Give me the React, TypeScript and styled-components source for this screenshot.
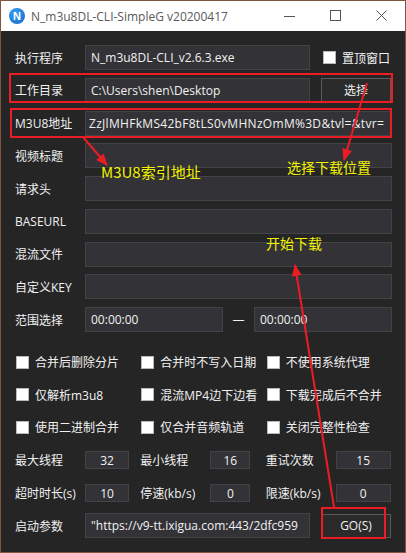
import React from "react";
import styled, { createGlobalStyle } from "styled-components";

const Global = createGlobalStyle`
  html, body { margin: 0; padding: 0; background: #ffffff; }
  * { box-sizing: border-box; }
`;

const FONT = `"Open Sans", "Noto Sans CJK SC", sans-serif`;

const Window = styled.div`
  position: relative;
  width: 406px;
  height: 553px;
  border: 1px solid #80573e;
  display: flex;
  flex-direction: column;
  font-family: ${FONT};
  overflow: hidden;
`;

const TitleBar = styled.div`
  height: 30px;
  background: #ffffff;
  display: flex;
  align-items: center;
  padding-left: 8px;
  flex: none;
`;

const AppIcon = styled.div`
  width: 16px;
  height: 16px;
  border-radius: 50%;
  background: radial-gradient(circle at 40% 35%, #3aa0f0, #1266c8);
  color: #fff;
  font: bold 11px "Liberation Sans", sans-serif;
  display: flex;
  align-items: center;
  justify-content: center;
`;

const Title = styled.div`
  margin-left: 6px;
  font-size: 12px;
  color: #5a5a5a;
  flex: 1;
  white-space: nowrap;
`;

const Controls = styled.div`
  display: flex;
  height: 100%;
`;

const CtrlBtn = styled.div`
  width: 46px;
  height: 100%;
  display: flex;
  align-items: center;
  justify-content: center;
`;

const Body = styled.div`
  flex: 1;
  background: #252526;
  padding: 14px 13px 0 14px;
  display: flex;
  flex-direction: column;
  color: #f1f1f1;
  font-size: 12px;
`;

const FieldList = styled.div`
  display: flex;
  flex-direction: column;
  gap: 7.75px;
`;

const FieldRow = styled.div`
  display: flex;
  align-items: center;
  height: 25px;
`;

const Label = styled.div`
  width: 70px;
  flex: none;
  white-space: nowrap;
`;

const TextBox = styled.div<{ $w?: number; $pad?: number; $ls?: number }>`
  height: 25px;
  ${(p) => (p.$w ? `width: ${p.$w}px; flex: none;` : `flex: 1; min-width: 0;`)}
  background: #333337;
  border: 1px solid #434346;
  display: flex;
  align-items: center;
  padding: 0 ${(p) => p.$pad ?? 5}px;
  letter-spacing: ${(p) => p.$ls ?? 0}px;
  white-space: nowrap;
  overflow: hidden;
  color: #f1f1f1;
`;

const Button = styled.div`
  width: 70px;
  height: 24px;
  margin-left: 11px;
  flex: none;
  background: #2b2b2c;
  border: 1px solid #5a5a5c;
  display: flex;
  align-items: center;
  justify-content: center;
`;

const Dash = styled.div`
  width: 31px;
  text-align: center;
  flex: none;
`;

const Check = styled.span`
  width: 13px;
  height: 13px;
  background: #ffffff;
  border: 1px solid #b9b9b9;
  flex: none;
`;

const CheckItem = styled.div<{ $ml?: number }>`
  display: flex;
  align-items: center;
  gap: 6px;
  margin-left: ${(p) => p.$ml ?? 1}px;
  white-space: nowrap;
`;

const Grid3 = styled.div<{ $h: number; $gap: number; $mt: number }>`
  display: grid;
  grid-template-columns: repeat(3, 1fr);
  grid-auto-rows: ${(p) => p.$h}px;
  row-gap: ${(p) => p.$gap}px;
  margin-top: ${(p) => p.$mt}px;
  margin-right: 1px;
`;

const NumPair = styled.div`
  display: flex;
  align-items: center;
`;

const NumBox = styled.div<{ $w: number }>`
  width: ${(p) => p.$w}px;
  height: 18px;
  background: #333337;
  border: 1px solid #434346;
  display: flex;
  align-items: center;
  justify-content: center;
`;

const LastRow = styled(FieldRow)`
  margin-top: 11px;
`;

const Overlay = styled.svg`
  position: absolute;
  left: -1px;
  top: -1px;
  pointer-events: none;
`;

const Note = styled.div<{ $x: number; $y: number; $size: number }>`
  position: absolute;
  left: ${(p) => p.$x - 1}px;
  top: ${(p) => p.$y - 1}px;
  font-family: "Noto Sans CJK SC", sans-serif;
  font-size: ${(p) => p.$size}px;
  line-height: 1;
  color: #f2f200;
  white-space: nowrap;
`;

const checks = [
  "合并后删除分片", "合并时不写入日期", "不使用系统代理",
  "仅解析m3u8", "混流MP4边下边看", "下载完成后不合并",
  "使用二进制合并", "仅合并音频轨道", "关闭完整性检查",
];

const nums: [string, string, number][] = [
  ["最大线程", "32", 44], ["最小线程", "16", 40], ["重试次数", "15", 55],
  ["超时时长(s)", "10", 44], ["停速(kb/s)", "0", 40], ["限速(kb/s)", "0", 55],
];

const RED = "#ec1c24";

export default function App() {
  return (
    <>
      <Global />
      <Window>
        <TitleBar>
          <AppIcon>N</AppIcon>
          <Title>N_m3u8DL-CLI-SimpleG v20200417</Title>
          <Controls>
            <CtrlBtn>
              <svg width="12" height="12" viewBox="0 0 12 12">
                <line x1="0" y1="6.5" x2="11" y2="6.5" stroke="#555" strokeWidth="1" />
              </svg>
            </CtrlBtn>
            <CtrlBtn>
              <svg width="12" height="12" viewBox="0 0 12 12">
                <rect x="0.5" y="0.5" width="10" height="10" fill="none" stroke="#555" strokeWidth="1" />
              </svg>
            </CtrlBtn>
            <CtrlBtn>
              <svg width="12" height="12" viewBox="0 0 12 12">
                <path d="M0.5 0.5 L10.5 10.5 M10.5 0.5 L0.5 10.5" stroke="#555" strokeWidth="1" />
              </svg>
            </CtrlBtn>
          </Controls>
        </TitleBar>
        <Body>
          <FieldList>
            <FieldRow>
              <Label>执行程序</Label>
              <TextBox $w={225}>N_m3u8DL-CLI_v2.6.3.exe</TextBox>
              <CheckItem $ml={13}>
                <Check />
                置顶窗口
              </CheckItem>
            </FieldRow>
            <FieldRow>
              <Label>工作目录</Label>
              <TextBox $w={225}>C:\Users\shen\Desktop</TextBox>
              <Button>选择</Button>
            </FieldRow>
            <FieldRow>
              <Label>M3U8地址</Label>
              <TextBox $pad={3} $ls={0.3}>ZzJlMHFkMS42bF8tLS0vMHNzOmM%3D&amp;tvl=&amp;tvr=</TextBox>
            </FieldRow>
            <FieldRow>
              <Label>视频标题</Label>
              <TextBox />
            </FieldRow>
            <FieldRow>
              <Label>请求头</Label>
              <TextBox />
            </FieldRow>
            <FieldRow>
              <Label>BASEURL</Label>
              <TextBox />
            </FieldRow>
            <FieldRow>
              <Label>混流文件</Label>
              <TextBox />
            </FieldRow>
            <FieldRow>
              <Label>自定义KEY</Label>
              <TextBox />
            </FieldRow>
            <FieldRow>
              <Label>范围选择</Label>
              <TextBox>00:00:00</TextBox>
              <Dash>—</Dash>
              <TextBox>00:00:00</TextBox>
            </FieldRow>
          </FieldList>

          <Grid3 $h={20} $gap={12.5} $mt={20}>
            {checks.map((c) => (
              <CheckItem key={c}>
                <Check />
                {c}
              </CheckItem>
            ))}
          </Grid3>

          <Grid3 $h={18} $gap={15} $mt={14}>
            {nums.map(([l, v, w]) => (
              <NumPair key={l}>
                <Label>{l}</Label>
                <NumBox $w={w}>{v}</NumBox>
              </NumPair>
            ))}
          </Grid3>

          <LastRow>
            <Label>启动参数</Label>
            <TextBox $w={225}>"https://v9-tt.ixigua.com:443/2dfc959</TextBox>
            <Button>GO(S)</Button>
          </LastRow>
        </Body>

        <Overlay width="406" height="553" viewBox="0 0 406 553">
          <defs>
            <marker id="head" markerUnits="userSpaceOnUse" markerWidth="12" markerHeight="10" refX="11" refY="5" orient="auto">
              <path d="M0 0 L12 5 L0 10 Z" fill={RED} />
            </marker>
          </defs>
          <rect x="10" y="74" width="382" height="28" fill="none" stroke={RED} strokeWidth="2" />
          <rect x="11" y="109" width="380" height="28" fill="none" stroke={RED} strokeWidth="2" />
          <rect x="322" y="508" width="63" height="30" fill="none" stroke={RED} strokeWidth="2" />
          <line x1="83" y1="137" x2="107" y2="165" stroke={RED} strokeWidth="2" markerEnd="url(#head)" />
          <line x1="367" y1="83" x2="344" y2="160" stroke={RED} strokeWidth="2" markerEnd="url(#head)" />
          <line x1="334" y1="507" x2="295" y2="265" stroke={RED} strokeWidth="2" markerEnd="url(#head)" />
        </Overlay>
        <Note $x={101} $y={164} $size={15}>M3U8索引地址</Note>
        <Note $x={287} $y={160} $size={14}>选择下载位置</Note>
        <Note $x={266} $y={236} $size={14}>开始下载</Note>
      </Window>
    </>
  );
}
